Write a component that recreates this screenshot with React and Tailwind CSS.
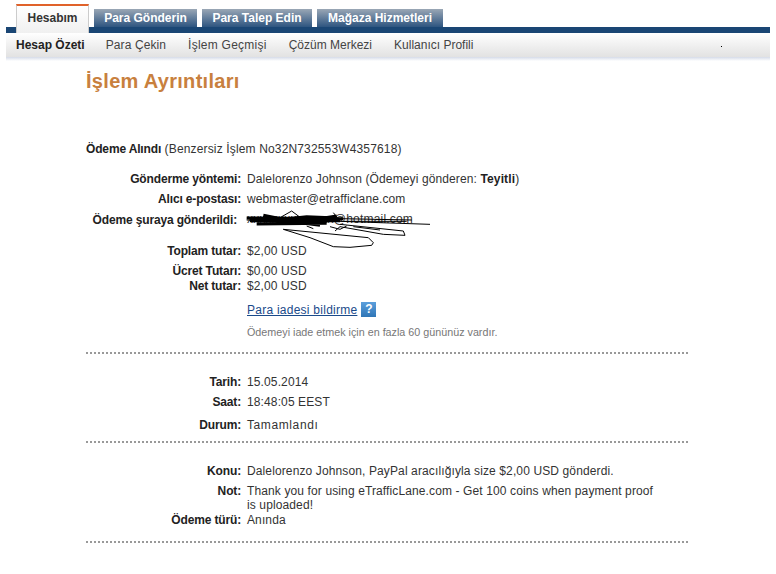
const font = 'font-["Liberation_Sans",Arial,sans-serif]';

const tabs = [
  { label: 'Para Gönderin', width: 'w-[103px]' },
  { label: 'Para Talep Edin', width: 'w-[110px]' },
  { label: 'Mağaza Hizmetleri', width: 'w-[126px]' },
];
const subLinks = [
  { label: 'Para Çekin', spacing: 'tracking-[0.1px]' },
  { label: 'İşlem Geçmişi', spacing: 'tracking-[0.25px]' },
  { label: 'Çözüm Merkezi', spacing: 'tracking-[0px]' },
  { label: 'Kullanıcı Profili', spacing: 'tracking-[0px]' },
];

// one row of the details table: right aligned label + value
const Row = ({ label, children, className = '', labelClass = '' }) => (
  <div className={`flex gap-[6px] ${className}`}>
    <div className={`w-[155px] shrink-0 text-right font-bold text-[#222] tracking-[-0.15px] ${labelClass}`}>{label}</div>
    <div className="w-[410px] text-[#333] tracking-[0.12px]">{children}</div>
  </div>
);

const Dotted = ({ className = '' }) => (
  <div className={`border-t-2 border-dotted border-[#999] ${className}`} />
);

export default function App() {
  return (
    <div className={`${font} w-[776px] h-[574px] bg-white text-[12px] leading-[14px] overflow-hidden`}>
      {/* Top tabs */}
      <div className="pt-[4px] pl-[16px] h-[27px] flex items-end relative z-10">
        <div className="w-[73px] h-[29px] -mb-[6px] bg-gradient-to-b from-white to-[#f0f0f0] border-x border-[#ccc] border-t-2 border-t-[#e0622a] text-center font-bold text-[#333] leading-[24px]">
          Hesabım
        </div>
        <div className="flex gap-[5px] ml-[5px]">
          {tabs.map((t) => (
            <div key={t.label} className={`${t.width} h-[18px] bg-gradient-to-b from-[#9aa7b5] to-[#2e5580] text-white font-bold leading-[19px] flex items-center justify-center`}>
              {t.label}
            </div>
          ))}
        </div>
      </div>
      <div className="mx-[6px] h-[6px] bg-[#1a4674]" />
      {/* Sub nav */}
      <div className="mx-[6px] h-[24px] bg-gradient-to-b from-white to-[#e2e2e2] flex items-center pl-[10px] gap-[22px] text-[#444] relative">
        <span className="font-bold text-[#222] -mr-[1px]">Hesap Özeti</span>
        {subLinks.map((s) => (
          <span key={s.label} className={s.spacing}>{s.label}</span>
        ))}
        <span className="absolute left-[715px] top-[13px] w-[1px] h-[1px] bg-black" />
      </div>
      <div className="mx-[6px] h-[4px] bg-gradient-to-b from-[#d5dbe8] to-white" />

      <div className="pl-[86px] w-[688px] box-content">
        <h1 className="mt-[7px] text-[20px] leading-[26px] font-bold text-[#c8803e] tracking-[0.3px]">İşlem Ayrıntıları</h1>

        <div className="mt-[48px] text-[#333] tracking-[0.15px]">
          <b className="text-[#222] tracking-[-0.15px]">Ödeme Alındı</b> (Benzersiz İşlem No32N732553W4357618)
        </div>

        <Row label="Gönderme yöntemi:" className="mt-[16px]">
          Dalelorenzo Johnson (Ödemeyi gönderen: <b className="text-[#222]">Teyitli</b>)
        </Row>
        <Row label="Alıcı e-postası:" className="mt-[6px]">webmaster@etrafficlane.com</Row>
        <Row label="Ödeme şuraya gönderildi:" labelClass="pr-[4px]" className="mt-[7px] relative">
          <span className="tracking-[0.2px] relative -top-[1px]">xxxxxxxxxxxxxx@hotmail.com</span>
          {/* scribbled out address, 3x units */}
          <svg className="absolute left-[154px] top-[-7px]" width="200" height="45" viewBox="0 0 600 135" fill="none" stroke="#000" strokeWidth="3">
            <path d="M20 42L300 46L570 55M300 38L515 42M310 46L500 46" />
            <path d="M20 36L310 38M30 44L300 44M50 54L260 52M70 28L130 40L200 32L290 36M90 38L240 58M150 52L290 30" strokeWidth="9" />
            <path d="M120 35L155 15L195 45M270 62L300 70L320 60M280 20L300 45M300 62L285 75" />
            <path d="M130 70L385 95L400 110L395 118L330 124L280 122L210 95L130 70" />
            <path d="M300 55L490 75L495 88L430 85L300 62M200 60L220 68M340 62L420 72" />
          </svg>
        </Row>
        <Row label="Toplam tutar:" className="mt-[17px]">$2,00 USD</Row>
        <Row label="Ücret Tutarı:" className="mt-[6px]">$0,00 USD</Row>
        <Row label="Net tutar:" className="mt-[1px]">$2,00 USD</Row>
        <div className="mt-[9px] ml-[161px] flex items-center gap-[4px]">
          <a className="text-[#1a4a8a] underline tracking-[0.25px]">Para iadesi bildirme</a>
          <span className="w-[15px] h-[15px] bg-gradient-to-b from-[#5b9fdc] to-[#2f76b6] text-white font-bold text-center leading-[15px]">?</span>
        </div>
        <div className="mt-[9px] ml-[161px] text-[10.75px] leading-[12px] text-[#777]">Ödemeyi iade etmek için en fazla 60 gününüz vardır.</div>
        <Dotted className="mt-[14px] w-[602px]" />

        <Row label="Tarih:" className="mt-[21px]">15.05.2014</Row>
        <Row label="Saat:" className="mt-[6px]">18:48:05 EEST</Row>
        <Row label="Durum:" className="mt-[9px]"><span className="tracking-[0.6px]">Tamamlandı</span></Row>
        <Dotted className="mt-[9px] w-[602px]" />

        <Row label="Konu:" className="mt-[21px]">Dalelorenzo Johnson, PayPal aracılığıyla size $2,00 USD gönderdi.</Row>
        <Row label="Not:" className="mt-[6px]">Thank you for using eTrafficLane.com - Get 100 coins when payment proof is uploaded!</Row>
        <Row label="Ödeme türü:" className="mt-[1px]">Anında</Row>
        <Dotted className="mt-[14px] w-[602px]" />
      </div>
    </div>
  );
}
